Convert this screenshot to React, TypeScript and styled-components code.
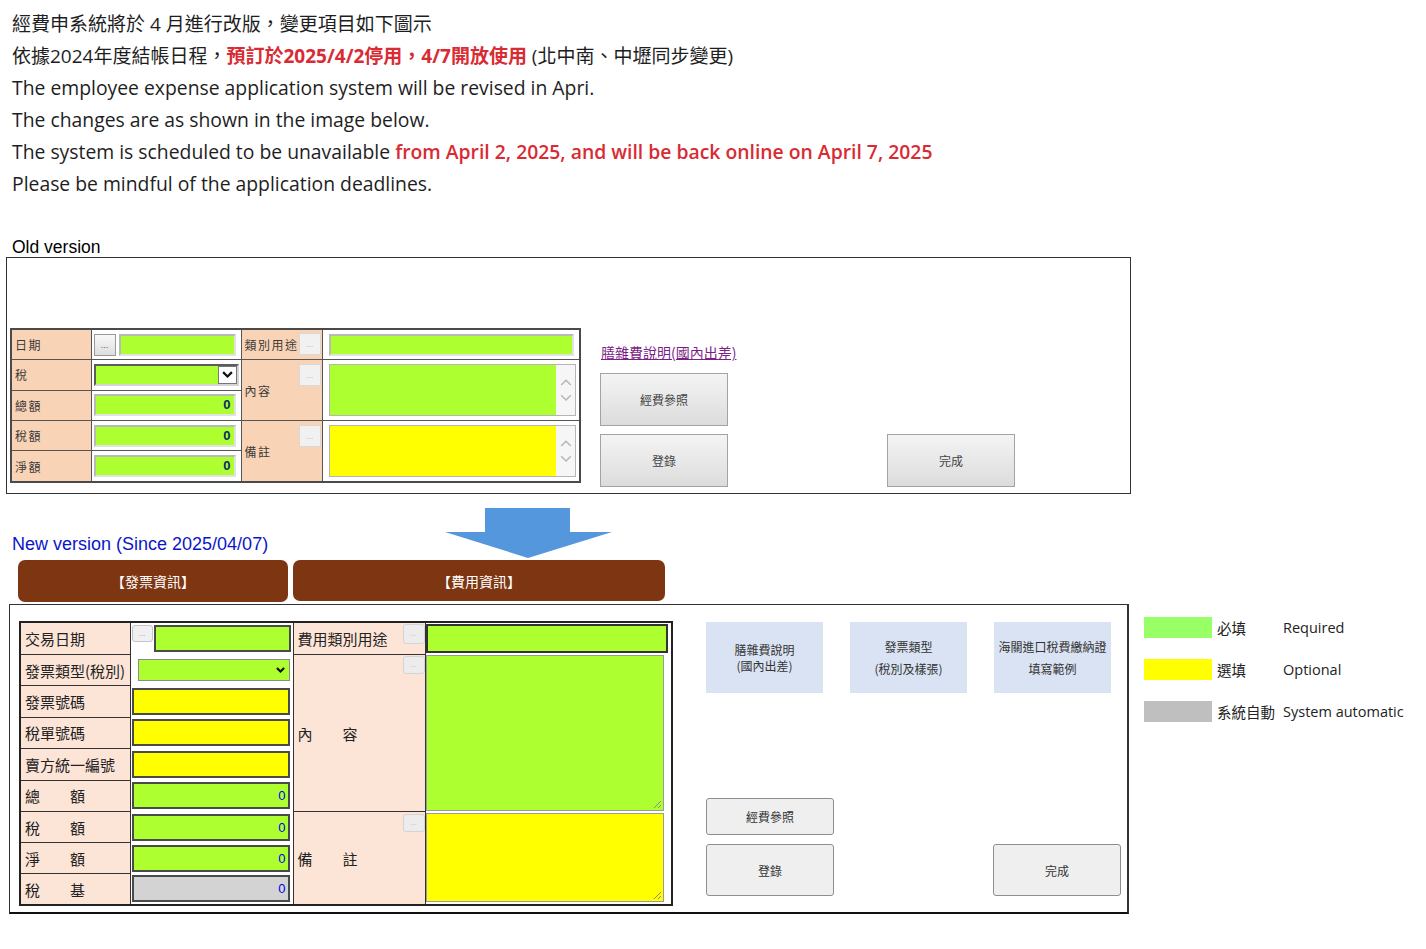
import React from "react";
import styled, { createGlobalStyle } from "styled-components";

const GlobalStyle = createGlobalStyle`
  html, body {
    margin: 0;
    padding: 0;
    background: #fff;
  }
  body {
    font-family: "Open Sans", "Noto Sans CJK TC", sans-serif;
    color: #1e1e1e;
  }
`;

const CJK = `"Noto Sans CJK TC", "Noto Sans", sans-serif`;

const Page = styled.div`
  width: 1426px;
  box-sizing: border-box;
  padding: 8px 0 20px 6px;
`;

const Notice = styled.div`
  margin-left: 6px;
  font-size: 19px;
  line-height: 32px;
  color: #1e1e1e;
`;

const EnLine = styled.div`
  font-size: 19.35px;
`;

const Red = styled.span<{ $bold?: boolean }>`
  color: #d92b33;
  font-weight: ${(p) => (p.$bold ? 700 : 600)};
`;

const SectionLabel = styled.div<{ $color?: string; $size?: number }>`
  font-family: "Liberation Sans", Arial, sans-serif;
  font-size: ${(p) => p.$size ?? 17.5}px;
  line-height: 20px;
  color: ${(p) => p.$color || "#000"};
`;

const OldTitle = styled(SectionLabel)`
  margin: 37px 0 0 6px;
`;

/* ---------- old version ---------- */

const OldBox = styled.div`
  width: 1125px;
  box-sizing: border-box;
  border: 1px solid #333;
  padding: 70px 0 6px 3px;
  display: flex;
  align-items: flex-end;
  gap: 19px;
`;

const OldTable = styled.table`
  width: 569px;
  table-layout: fixed;
  border-collapse: collapse;
  border: 2px solid #4a4a4a;
  margin-bottom: 4px;
  font-family: ${CJK};

  td {
    border: 1px solid #555;
    padding: 0;
    height: 29px;
    vertical-align: middle;
  }
`;

const OldLabel = styled.td`
  background: #f9d3b5;
  font-size: 12px;
  letter-spacing: 1.5px;
  white-space: nowrap;
  color: #3a3a3a;
  && {
    padding-left: 3px;
  }
`;

const OldCell = styled.td`
  background: #fff;
  && {
    padding: 0 5px 0 2px;
  }
`;

const LabelWithButton = styled.div<{ $h: number; $top: number }>`
  height: ${(p) => p.$h}px;
  display: flex;
  align-items: center;
  justify-content: space-between;

  & > button {
    align-self: flex-start;
    margin-top: ${(p) => p.$top}px;
  }
`;

const OldDots = styled.button<{ $disabled?: boolean }>`
  width: 22px;
  height: 22px;
  padding: 0;
  flex: none;
  border: 1px solid ${(p) => (p.$disabled ? "#d8d8d8" : "#9a9a9a")};
  background: ${(p) =>
    p.$disabled ? "#f1f1f1" : "linear-gradient(#f8f8f8, #dedede)"};
  color: ${(p) => (p.$disabled ? "#b8b8b8" : "#555")};
  font-size: 9px;
  line-height: 14px;
  font-family: "Liberation Sans", sans-serif;
  margin-right: 1px;
`;

const FieldRow = styled.div<{ $gap?: number; $top?: boolean }>`
  display: flex;
  align-items: ${(p) => (p.$top ? "flex-start" : "center")};
  gap: ${(p) => p.$gap ?? 2}px;
`;

const OldField = styled.div<{ $bg?: string; $h?: number; $ml?: number }>`
  flex: 1;
  height: ${(p) => p.$h ?? 18}px;
  margin-left: ${(p) => p.$ml ?? 0}px;
  background: ${(p) => p.$bg || "#adff2f"};
  border: 2px solid;
  border-color: #b9b9b9 #e2e2e2 #e2e2e2 #b9b9b9;
  font-family: "Liberation Sans", sans-serif;
  font-weight: 700;
  font-size: 13px;
  line-height: 18px;
  color: #0a2a6a;
  text-align: right;
  padding-right: 3px;
`;

const OldSelect = styled.div`
  height: 18px;
  display: flex;
  background: #adff2f;
  border: 2px solid;
  border-color: #5c5c5c #d5d5d5 #d5d5d5 #5c5c5c;
  margin-right: -3px;

  & > span {
    flex: 1;
  }
`;

const OldSelectArrow = styled.div`
  width: 17px;
  height: 16px;
  background: #fff;
  border: 1px solid #777;
  display: flex;
  align-items: center;
  justify-content: center;
`;

const OldArea = styled.div<{ $bg: string }>`
  height: 50px;
  display: flex;
  border: 1px solid #b5b5b5;
  margin: 0 -2px 0 4px;

  & > span {
    flex: 1;
    background: ${(p) => p.$bg};
  }
`;

const OldScroll = styled.div`
  width: 19px;
  background: #f6f6f6;
  display: flex;
  flex-direction: column;
  align-items: center;
  justify-content: center;
  gap: 8px;
`;

const OldSide = styled.div`
  display: flex;
  flex-direction: column;
`;

const OldLink = styled.a`
  font-family: ${CJK};
  font-size: 14px;
  line-height: 16px;
  color: #7b1f86;
  text-decoration: underline;
  margin: 0 0 13px 1px;
  cursor: pointer;
`;

const ButtonGrid = styled.div<{ $rows: string; $rowGap?: number }>`
  display: grid;
  grid-template-columns: 128px 128px;
  grid-template-rows: ${(p) => p.$rows};
  column-gap: 159px;
  row-gap: ${(p) => p.$rowGap ?? 8}px;
`;

const OldButton = styled.button<{ $col?: number }>`
  grid-column: ${(p) => p.$col ?? 1};
  border: 1px solid #a3a3a3;
  background: linear-gradient(#f4f4f4, #dcdcdc);
  font-family: ${CJK};
  font-size: 12px;
  color: #444;
  padding: 0;
`;

/* ---------- transition ---------- */

const ArrowRow = styled.div`
  display: flex;
  align-items: flex-end;
  margin: 14px 0 0 6px;
  height: 50px;
`;

const NewTitle = styled(SectionLabel)`
  width: 433px;
  margin-bottom: 4px;
`;

const Tabs = styled.div`
  display: flex;
  gap: 5px;
  margin: 2px 0 0 12px;
`;

const Tab = styled.div<{ $w: number; $h: number }>`
  width: ${(p) => p.$w}px;
  height: ${(p) => p.$h}px;
  background: #7e3511;
  border-radius: 7px;
  color: #fff;
  font-family: ${CJK};
  font-size: 14px;
  display: flex;
  align-items: center;
  justify-content: center;
`;

/* ---------- new version ---------- */

const NewRow = styled.div`
  display: flex;
  align-items: flex-start;
  margin: 2px 0 0 3px;
`;

const NewBox = styled.div`
  width: 1120px;
  box-sizing: border-box;
  border: 1px solid #333;
  border-right-width: 2px;
  border-bottom-width: 2px;
  border-bottom-color: #111;
  padding: 16px 0 6px 9px;
  display: flex;
  gap: 33px;
`;

const NewTable = styled.table`
  width: 652px;
  table-layout: fixed;
  border-collapse: collapse;
  border: 2px solid #222;
  font-family: ${CJK};

  td {
    border: 1px solid #333;
    padding: 0;
    vertical-align: middle;
  }
`;

const NewTr = styled.tr`
  height: 31.1px;
`;

const NewLabel = styled.td`
  background: #fce4d6;
  font-size: 15px;
  color: #222;
  white-space: pre;
  && {
    padding-left: 4px;
  }
`;

const NewCell = styled.td<{ $pl?: number; $pr?: number }>`
  background: #fff;
  && {
    border-top: none;
    border-bottom: none;
    padding: 0 ${(p) => p.$pr ?? 3}px 0 ${(p) => p.$pl ?? 1}px;
  }
`;

const NewDots = styled.button<{ $h: number }>`
  width: 22px;
  height: ${(p) => p.$h}px;
  flex: none;
  padding: 0;
  border: 1px solid #d4d4d4;
  border-radius: 3px;
  background: #ececec;
  color: #bcbcbc;
  font-size: 8px;
  line-height: 8px;
  font-family: "Liberation Sans", sans-serif;
`;

const SmallDots = styled(NewDots)`
  width: 21px;
  border-color: #c4c4c4;
  background: #f0f0f0;
  color: #999;
`;

const NewField = styled.div<{ $bg?: string; $h?: number; $dark?: boolean }>`
  flex: 1;
  height: ${(p) => p.$h ?? 23}px;
  background: ${(p) => p.$bg || "#adff2f"};
  border: 2px solid ${(p) => (p.$dark ? "#333" : "#4a4a4a")};
  font-family: "Liberation Sans", sans-serif;
  font-size: 13px;
  line-height: ${(p) => p.$h ?? 23}px;
  color: #0000ee;
  text-align: right;
  padding-right: 2px;
`;

const NewSelect = styled.div`
  height: 20px;
  background: #adff2f;
  border: 1px solid #8c8c8c;
  display: flex;
  align-items: center;
  justify-content: flex-end;
  padding-right: 4px;
`;

const NewArea = styled.div<{ $bg: string; $h: number }>`
  height: ${(p) => p.$h}px;
  background: ${(p) => p.$bg};
  border: 1px solid #9a9a9a;
  display: flex;
  align-items: flex-end;
  justify-content: flex-end;
  padding: 0 1px 1px 0;
  box-sizing: border-box;
`;

const NewSide = styled.div`
  width: 415px;
  display: flex;
  flex-direction: column;
  justify-content: space-between;
  padding: 1px 0 10px;
  box-sizing: border-box;
`;

const InfoRow = styled.div`
  display: flex;
  gap: 27px;
`;

const InfoButton = styled.button<{ $lh: number }>`
  width: 117px;
  height: 71px;
  border: none;
  background: #dae3f3;
  font-family: ${CJK};
  font-size: 12px;
  line-height: ${(p) => p.$lh}px;
  color: #333;
  padding: 0;
  white-space: pre;
`;

const NewButton = styled.button<{ $col?: number }>`
  grid-column: ${(p) => p.$col ?? 1};
  border: 1px solid #8e8e8e;
  border-radius: 3px;
  background: #efefef;
  font-family: ${CJK};
  font-size: 12px;
  color: #333;
  padding: 0;
`;

/* ---------- legend ---------- */

const Legend = styled.div`
  margin: 13px 0 0 15px;
  display: flex;
  flex-direction: column;
  gap: 21px;
`;

const LegendItem = styled.div`
  display: flex;
  align-items: center;
  height: 21px;
  font-family: "Open Sans", ${CJK};
  font-size: 14.5px;
  color: #222;
`;

const Swatch = styled.span<{ $bg: string }>`
  width: 68px;
  height: 21px;
  background: ${(p) => p.$bg};
  margin-right: 5px;
`;

const LegendZh = styled.span`
  width: 66px;
  font-family: ${CJK};
`;

/* ---------- drawings ---------- */

const Chevron = ({
  up,
  color = "#111",
  w = 11,
  sw = 2,
}: {
  up?: boolean;
  color?: string;
  w?: number;
  sw?: number;
}) => (
  <svg width={w} height={w * 0.6} viewBox="0 0 10 6">
    <polyline
      points={up ? "1,5 5,1 9,5" : "1,1 5,5 9,1"}
      fill="none"
      stroke={color}
      strokeWidth={sw}
    />
  </svg>
);

const Grip = () => (
  <svg width="9" height="9" viewBox="0 0 9 9">
    <line x1="1" y1="8" x2="8" y2="1" stroke="#888" strokeWidth="1" />
    <line x1="5" y1="8" x2="8" y2="5" stroke="#888" strokeWidth="1" />
  </svg>
);

const DownArrow = () => (
  <svg width="168" height="50" viewBox="0 0 168 50">
    <polygon points="40,0 125,0 125,24 167,24 83,50 0,24 40,24" fill="#5597dc" />
  </svg>
);

const oldScroll = (
  <OldScroll>
    <Chevron up color="#b5b5b5" w={12} sw={1.2} />
    <Chevron color="#b5b5b5" w={12} sw={1.2} />
  </OldScroll>
);

function App() {
  return (
    <Page>
      <GlobalStyle />
      <Notice>
        <div>經費申系統將於 4 月進行改版，變更項目如下圖示</div>
        <div>
          依據2024年度結帳日程，<Red $bold>預訂於2025/4/2停用，4/7開放使用</Red> (北中南、中壢同步變更)
        </div>
        <EnLine>The employee expense application system will be revised in Apri.</EnLine>
        <EnLine>The changes are as shown in the image below.</EnLine>
        <EnLine>
          The system is scheduled to be unavailable{" "}
          <Red>from April 2, 2025, and will be back online on April 7, 2025</Red>
        </EnLine>
        <EnLine>Please be mindful of the application deadlines.</EnLine>
      </Notice>

      <OldTitle>Old version</OldTitle>
      <OldBox>
        <OldTable>
          <colgroup>
            <col style={{ width: 80 }} />
            <col style={{ width: 150 }} />
            <col style={{ width: 81 }} />
            <col style={{ width: 258 }} />
          </colgroup>
          <tbody>
            <tr>
              <OldLabel>日期</OldLabel>
              <OldCell>
                <FieldRow>
                  <OldDots>...</OldDots>
                  <OldField />
                </FieldRow>
              </OldCell>
              <OldLabel>
                <LabelWithButton $h={29} $top={3}>
                  <span>類別用途</span>
                  <OldDots $disabled>...</OldDots>
                </LabelWithButton>
              </OldLabel>
              <OldCell>
                <OldField $ml={4} />
              </OldCell>
            </tr>
            <tr>
              <OldLabel>稅</OldLabel>
              <OldCell>
                <OldSelect>
                  <span />
                  <OldSelectArrow>
                    <Chevron />
                  </OldSelectArrow>
                </OldSelect>
              </OldCell>
              <OldLabel rowSpan={2}>
                <LabelWithButton $h={60} $top={4}>
                  <span>內容</span>
                  <OldDots $disabled>...</OldDots>
                </LabelWithButton>
              </OldLabel>
              <OldCell rowSpan={2}>
                <OldArea $bg="#adff2f">
                  <span />
                  {oldScroll}
                </OldArea>
              </OldCell>
            </tr>
            <tr>
              <OldLabel>總額</OldLabel>
              <OldCell>
                <OldField>0</OldField>
              </OldCell>
            </tr>
            <tr>
              <OldLabel>稅額</OldLabel>
              <OldCell>
                <OldField>0</OldField>
              </OldCell>
              <OldLabel rowSpan={2}>
                <LabelWithButton $h={60} $top={4}>
                  <span>備註</span>
                  <OldDots $disabled>...</OldDots>
                </LabelWithButton>
              </OldLabel>
              <OldCell rowSpan={2}>
                <OldArea $bg="#ffff00">
                  <span />
                  {oldScroll}
                </OldArea>
              </OldCell>
            </tr>
            <tr>
              <OldLabel>淨額</OldLabel>
              <OldCell>
                <OldField>0</OldField>
              </OldCell>
            </tr>
          </tbody>
        </OldTable>

        <OldSide>
          <OldLink>膳雜費說明(國內出差)</OldLink>
          <ButtonGrid $rows="53px 53px">
            <OldButton>經費參照</OldButton>
            <OldButton>登錄</OldButton>
            <OldButton $col={2}>完成</OldButton>
          </ButtonGrid>
        </OldSide>
      </OldBox>

      <ArrowRow>
        <NewTitle $color="#0b16c8" $size={18}>
          New version (Since 2025/04/07)
        </NewTitle>
        <DownArrow />
      </ArrowRow>

      <Tabs>
        <Tab $w={270} $h={42}>【發票資訊】</Tab>
        <Tab $w={372} $h={41}>【費用資訊】</Tab>
      </Tabs>

      <NewRow>
        <NewBox>
          <NewTable>
            <colgroup>
              <col style={{ width: 110 }} />
              <col style={{ width: 163 }} />
              <col style={{ width: 132 }} />
              <col style={{ width: 247 }} />
            </colgroup>
            <tbody>
              <NewTr>
                <NewLabel>交易日期</NewLabel>
                <NewCell $pr={2}>
                  <FieldRow $gap={1} $top>
                    <SmallDots $h={17}>...</SmallDots>
                    <NewField $h={23} />
                  </FieldRow>
                </NewCell>
                <NewLabel>
                  <LabelWithButton $h={31} $top={1}>
                    <span>費用類別用途</span>
                    <NewDots $h={20}>...</NewDots>
                  </LabelWithButton>
                </NewLabel>
                <NewCell $pl={0}>
                  <NewField $h={25} $dark />
                </NewCell>
              </NewTr>
              <NewTr>
                <NewLabel>發票類型(稅別)</NewLabel>
                <NewCell $pl={7}>
                  <NewSelect>
                    <Chevron w={9} sw={2.4} />
                  </NewSelect>
                </NewCell>
                <NewLabel rowSpan={5}>
                  <LabelWithButton $h={156} $top={1}>
                    <span>內　　容</span>
                    <NewDots $h={18}>...</NewDots>
                  </LabelWithButton>
                </NewLabel>
                <NewCell rowSpan={5} $pl={0} $pr={7}>
                  <NewArea $bg="#adff2f" $h={156}>
                    <Grip />
                  </NewArea>
                </NewCell>
              </NewTr>
              <NewTr>
                <NewLabel>發票號碼</NewLabel>
                <NewCell>
                  <NewField $bg="#ffff00" />
                </NewCell>
              </NewTr>
              <NewTr>
                <NewLabel>稅單號碼</NewLabel>
                <NewCell>
                  <NewField $bg="#ffff00" />
                </NewCell>
              </NewTr>
              <NewTr>
                <NewLabel>賣方統一編號</NewLabel>
                <NewCell>
                  <NewField $bg="#ffff00" />
                </NewCell>
              </NewTr>
              <NewTr>
                <NewLabel>總　　額</NewLabel>
                <NewCell>
                  <NewField>0</NewField>
                </NewCell>
              </NewTr>
              <NewTr>
                <NewLabel>稅　　額</NewLabel>
                <NewCell>
                  <NewField>0</NewField>
                </NewCell>
                <NewLabel rowSpan={3}>
                  <LabelWithButton $h={92} $top={2}>
                    <span>備　　註</span>
                    <NewDots $h={18}>...</NewDots>
                  </LabelWithButton>
                </NewLabel>
                <NewCell rowSpan={3} $pl={0} $pr={7}>
                  <NewArea $bg="#ffff00" $h={89}>
                    <Grip />
                  </NewArea>
                </NewCell>
              </NewTr>
              <NewTr>
                <NewLabel>淨　　額</NewLabel>
                <NewCell>
                  <NewField>0</NewField>
                </NewCell>
              </NewTr>
              <NewTr>
                <NewLabel>稅　　基</NewLabel>
                <NewCell>
                  <NewField $bg="#d3d3d3">0</NewField>
                </NewCell>
              </NewTr>
            </tbody>
          </NewTable>

          <NewSide>
            <InfoRow>
              <InfoButton $lh={16}>{"膳雜費說明\n(國內出差)"}</InfoButton>
              <InfoButton $lh={22}>{"發票類型\n(稅別及樣張)"}</InfoButton>
              <InfoButton $lh={22}>{"海關進口稅費繳納證\n填寫範例"}</InfoButton>
            </InfoRow>
            <ButtonGrid $rows="37px 52px" $rowGap={9}>
              <NewButton>經費參照</NewButton>
              <NewButton>登錄</NewButton>
              <NewButton $col={2}>完成</NewButton>
            </ButtonGrid>
          </NewSide>
        </NewBox>

        <Legend>
          <LegendItem>
            <Swatch $bg="#99ff66" />
            <LegendZh>必填</LegendZh>
            <span>Required</span>
          </LegendItem>
          <LegendItem>
            <Swatch $bg="#ffff00" />
            <LegendZh>選填</LegendZh>
            <span>Optional</span>
          </LegendItem>
          <LegendItem>
            <Swatch $bg="#bfbfbf" />
            <LegendZh>系統自動</LegendZh>
            <span>System automatic</span>
          </LegendItem>
        </Legend>
      </NewRow>
    </Page>
  );
}

export default App;
